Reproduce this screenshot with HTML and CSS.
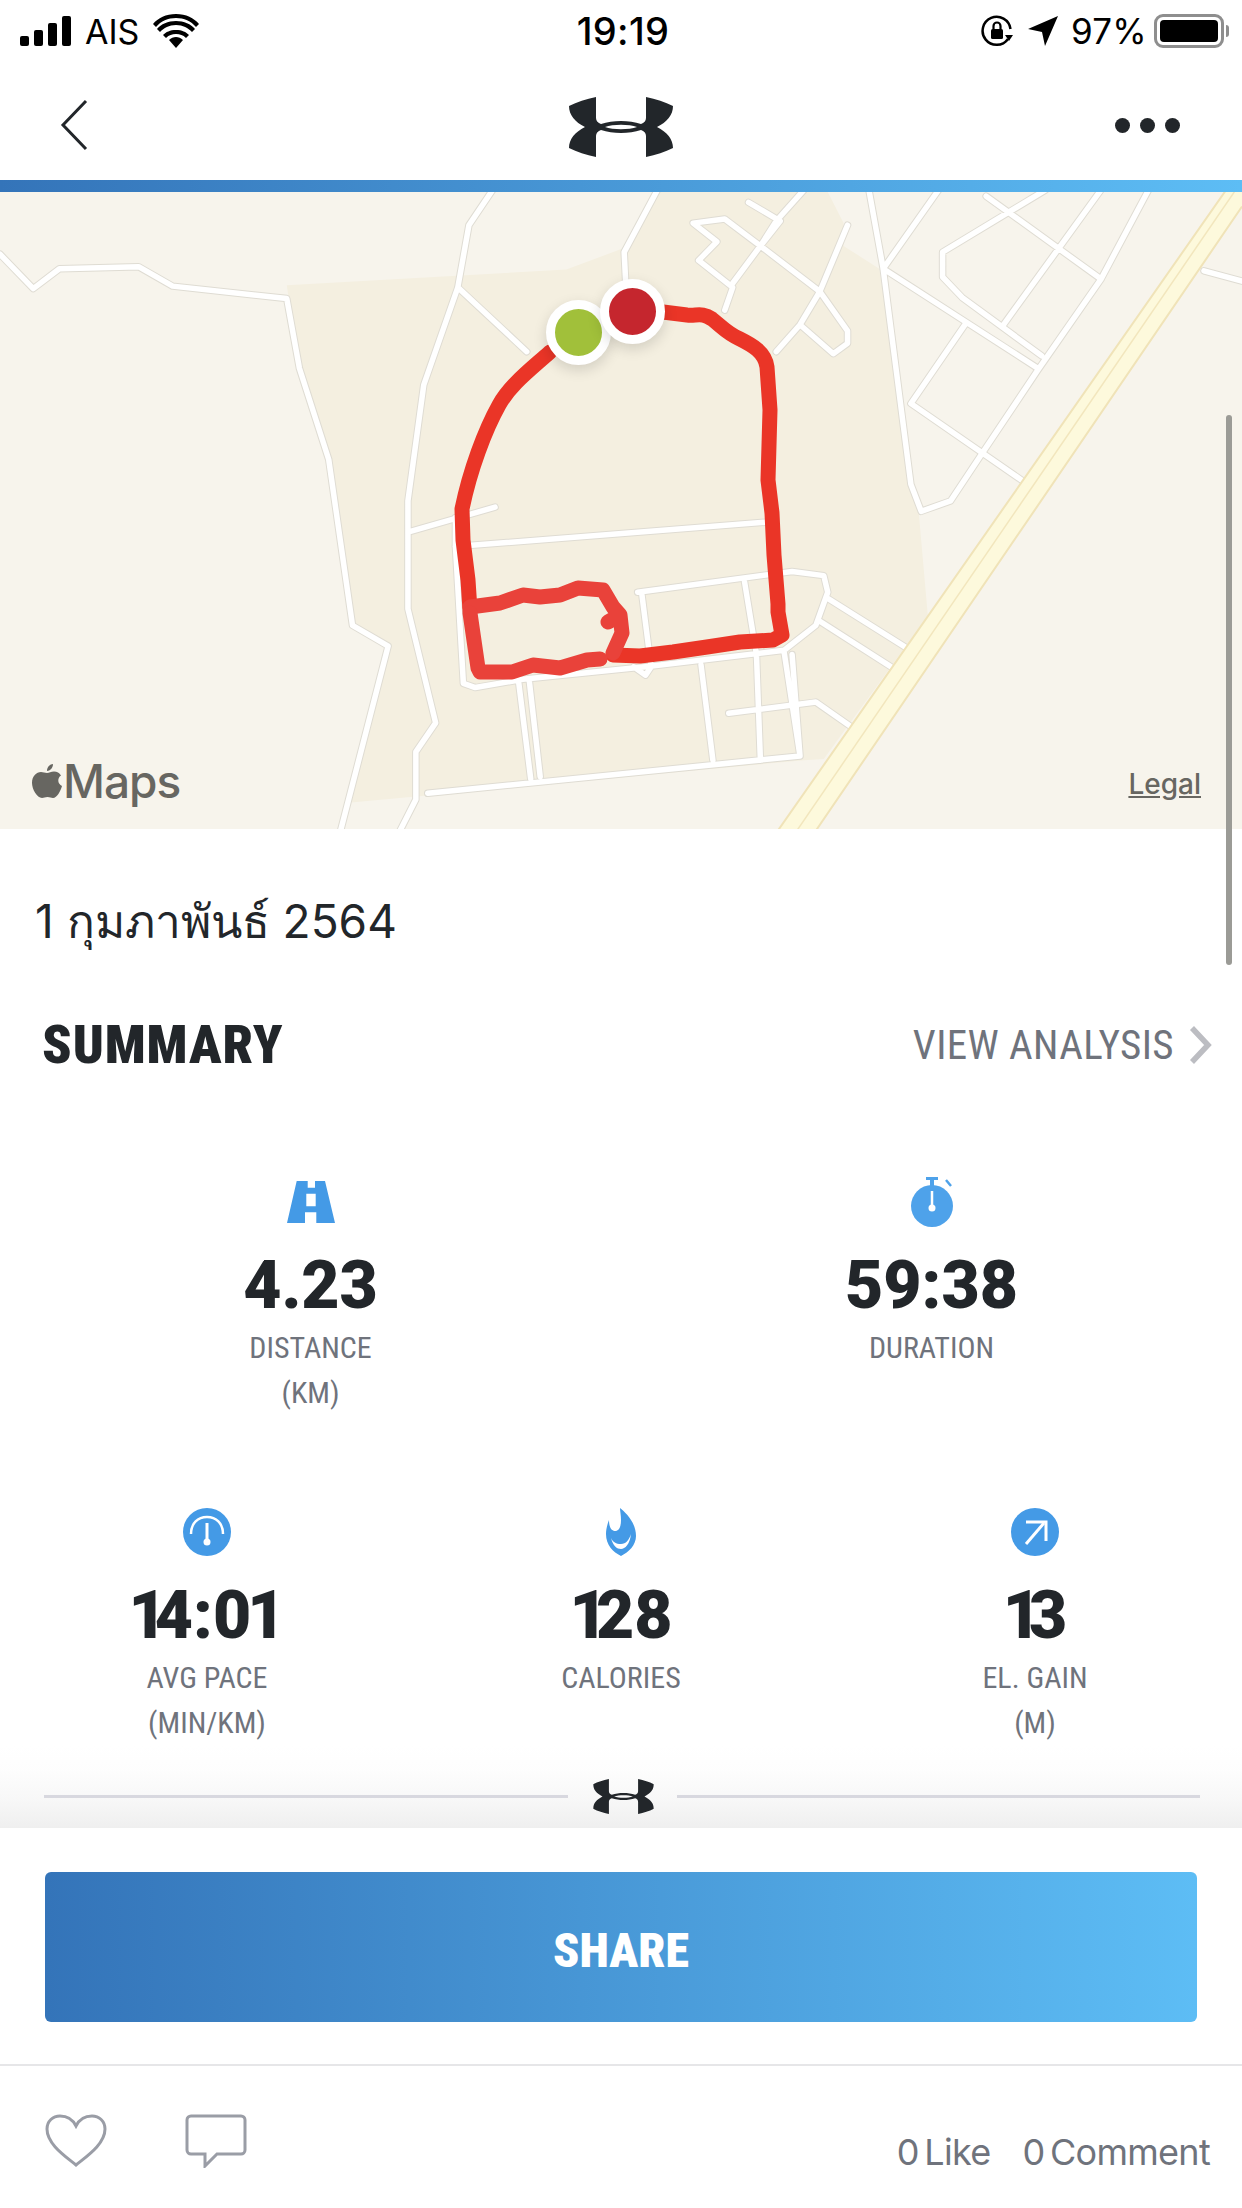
FILE: index.html
```html
<!DOCTYPE html>
<html lang="th">
<head>
<meta charset="utf-8">
<title>Workout summary</title>
<link rel="stylesheet" href="styles.css">
</head>
<body>
<div class="screen">
  <svg width="0" height="0" class="defs">
    <symbol id="ua" viewBox="0 0 104 60">
      <path fill-rule="evenodd" d="M27 0C17 2 8 5 0 9C0 18 6 25 16 30C6 35 0 42 0 51C8 55 17 58 27 60V39C27 36 29 34 32 33C44 37 60 37 72 33C75 34 77 36 77 39V60C87 58 96 55 104 51C104 42 98 35 88 30C98 25 104 18 104 9C96 5 87 2 77 0V21C77 24 75 26 72 27C60 23 44 23 32 27C29 26 27 24 27 21ZM36 30C44 27 60 27 68 30C60 33 44 33 36 30Z"/>
    </symbol>
  </svg>

  <div class="status">
    <div class="status-left">
      <svg class="signal" width="52" height="30" viewBox="0 0 52 30"><rect x="0" y="20" width="9" height="10" rx="2"/><rect x="14" y="14" width="9" height="16" rx="2"/><rect x="28" y="7" width="9" height="23" rx="2"/><rect x="42" y="0" width="9" height="30" rx="2"/></svg>
      <span class="carrier">AIS</span>
      <svg class="wifi" width="46" height="34" viewBox="0 0 46 34"><path d="M23 34L16 26C20 22 26 22 30 26ZM23 16C29 16 33 18 36 21L33 24C30 21 27 20 23 20S16 21 13 24L10 21C13 18 17 16 23 16ZM23 7C31 7 38 10 42 15L39 18C35 14 30 11 23 11S11 14 7 18L4 15C8 10 15 7 23 7ZM23 0C33 0 41 4 46 10L43 13C38 7 31 4 23 4S8 7 3 13L0 10C5 4 13 0 23 0Z"/></svg>
    </div>
    <div class="status-time">19:19</div>
    <div class="status-right">
      <svg class="lock" width="32" height="32" viewBox="0 0 32 32"><path d="M27 24A14 14 0 1 1 29.5 14" fill="none" stroke="#000" stroke-width="2.5"/><path d="M24 20h8l-4 6z"/><rect x="10" y="14" width="12" height="10" rx="1.5"/><path d="M12.500 14V11a3.500 3.500 0 0 1 7 0v3" fill="none" stroke="#000" stroke-width="2.200"/></svg>
      <svg class="arrow" width="30" height="30" viewBox="0 0 30 30"><path d="M30 0L0 13L14 16L17 30Z"/></svg>
      <span class="battery-text">97%</span>
      <div class="battery"><div class="battery-fill"></div></div>
      <div class="battery-nub"></div>
    </div>
  </div>

  <header class="topbar">
    <svg class="back" width="28" height="52" viewBox="0 0 28 52"><path d="M26 2L3 26L26 50" fill="none" stroke="#22262a" stroke-width="3"/></svg>
    <svg class="logo" width="104" height="60"><use href="#ua"/></svg>
    <div class="dots"><i></i><i></i><i></i></div>
  </header>
  <div class="gradient-bar"></div>

  <div class="map">
    <svg class="map-svg" viewBox="0 5 1568 1536" preserveAspectRatio="none">
      <defs>
        <path id="r1" class="road" d="M0 155L42 238L75 190L175 185L218 232L362 262L378 430L415 650L445 1050L490 1100L430 1545"/>
        <path id="r2" class="road" d="M622 0L592 85L578 235L535 470L515 750L515 1010L550 1285L525 1355L525 1470L505 1545M578 235L665 390M830 0L788 150L790 225M515 825L625 765M575 860L975 800"/>
        <path id="r3" class="road" d="M805 970L1000 920L1040 930L1045 970L1030 1050L990 1110L815 1150L660 1180L600 1200L585 1190L575 860L575 790M810 970L822 1150L815 1170L800 1150M940 945L955 1120L960 1375M885 1145L900 1375M540 1455L1010 1365L1000 1120M990 1115L1010 1365M655 1190L670 1420M668 1180L682 1415M920 1262L1030 1235L1075 1295M1045 985L1145 1105M1035 1040L1125 1150"/>
        <path id="r4" class="road" d="M945 30L985 75L960 135L915 70L875 80L905 125L882 170L925 235L915 290M1015 0L980 75L960 135L925 225M960 135L1035 245L1070 340V370L1052 395L1010 325L980 390M1070 85L1035 245L1010 325M1097 0L1115 190L1150 710L1163 775L1200 750L1240 635L1310 435L1390 215L1450 0M1185 0L1115 190L1310 430M1245 15L1390 215M1320 0L1190 150V210L1215 260L1315 400M1390 0L1265 330M1220 320L1150 515L1290 700M1520 195L1568 220"/>
      </defs>
      <rect x="0" y="0" width="1568" height="1568" fill="#f7f4ec"/>
      <path class="park" d="M362 230L715 192L785 142L830 5H1045L1065 80V135L1110 190L1135 500L1160 780L1172 1040L1140 1110L1040 1372L1015 1375L440 1478L490 1100L445 1050L415 650L378 430Z"/>
      <g class="halo"><use href="#r1"/><use href="#r2"/><use href="#r3"/><use href="#r4"/></g>
      <g class="core"><use href="#r1"/><use href="#r2"/><use href="#r3"/><use href="#r4"/></g>
      <path class="hw-band" d="M1548 0H1568V40L1030 1545H982Z"/>
      <path class="hw-edge" d="M1548 0L982 1545M1568 40L1030 1545"/>
      <path class="hw-line" d="M1560 0L1006 1545"/>
    </svg>
    <svg class="route-layer" viewBox="0 192 1242 637">
      <path class="route" d="M663 312L687 315C697 316 702 312 712 319C722 327 728 334 740 339C752 345 765 352 767 367L770 410L768 480L772 513L774 555L778 604L778 612L782 635L773 640L740 642L707 647L673 652L640 656L613 655"/>
      <path class="route" d="M550 352C530 370 510 385 499 405C485 430 470 470 462 509L463 540L468 580L470 610"/>
      <path class="route route-soft" d="M470 607L500 603L523 595L540 597L560 595L578 588L603 590L613 607L620 615L622 633L613 653M608 622L620 615"/>
      <path class="route route-soft" d="M470 613L478 668L480 672L512 672L533 665L560 668L587 660L600 659"/>
    </svg>
    <div class="pin pin-green"></div>
    <div class="pin pin-red"></div>
    <div class="maps-mark">
      <svg width="30" height="36" viewBox="0 0 30 36"><path d="M21 1C21 5 18 8 15 8C15 4 18 1 21 1ZM15 10C17 10 19 8.500 22 8.500C25 8.500 27.500 10 29 12.500C25 15 25.500 21 30 23C28.500 28 25 35 21 35C19 35 18 34 15.500 34S12 35 10 35C5 35 0 26 0 20C0 13 4.500 9 9 9C11 9 13 10 15 10Z"/></svg>
      <span>Maps</span>
    </div>
    <span class="legal">Legal</span>
  </div>

  <div class="scrollbar"></div>

  <div class="date">1 กุมภาพันธ์ 2564</div>

  <div class="summary-head">
    <h2 class="summary-title">SUMMARY</h2>
    <div class="analysis">
      <span class="analysis-text">VIEW ANALYSIS</span>
      <svg width="24" height="38" viewBox="0 0 24 38"><path d="M4 2L20 19L4 36" fill="none" stroke="#bcbdc2" stroke-width="5.500"/></svg>
    </div>
  </div>

  <div class="stats stats-two">
    <div class="stat">
      <div class="stat-icon"><svg width="48" height="42" viewBox="0 0 48 42"><path fill="#449ae6" fill-rule="evenodd" d="M9.700 0H20.700V6.700H28V0H38L48 42H29.300V31.300H18V42H0ZM19.300 12.700V25.300H28.700V12.700Z"/></svg></div>
      <div class="stat-value">4.23</div>
      <div class="stat-label">DISTANCE<br>(KM)</div>
    </div>
    <div class="stat">
      <div class="stat-icon"><svg width="48" height="50" viewBox="0 0 48 50"><circle cx="24" cy="29" r="21" fill="#4ea2ea"/><rect x="18" y="0" width="12" height="3" fill="#4ea2ea"/><rect x="22" y="2" width="4" height="7" fill="#4ea2ea"/><path d="M38 3L43 9" stroke="#4ea2ea" stroke-width="2.500"/><path d="M24 14V34" stroke="#fff" stroke-width="2.500"/><circle cx="24" cy="31" r="3.500" fill="#fff"/></svg></div>
      <div class="stat-value">59:38</div>
      <div class="stat-label">DURATION</div>
    </div>
  </div>

  <div class="stats stats-three">
    <div class="stat">
      <div class="stat-icon"><svg width="48" height="48" viewBox="0 0 48 48"><circle cx="24" cy="24" r="24" fill="#449ae6"/><path d="M8 26C8 15 15 9 24 9S40 15 40 26" fill="none" stroke="#fff" stroke-width="2.500"/><path d="M24 15V32" stroke="#fff" stroke-width="3"/><circle cx="24" cy="34" r="3.500" fill="#fff"/></svg></div>
      <div class="stat-value"><span class="one">1</span>4:<span class="zero">0</span>1</div>
      <div class="stat-label">AVG PACE<br>(MIN/KM)</div>
    </div>
    <div class="stat">
      <div class="stat-icon"><svg width="32" height="48" viewBox="0 0 32 48"><path fill="#449ae6" d="M15 0C20 4 31 14 31 28C31 37 24 44 16 48C8 44 1 37 1 26C1 22 2 17 4 12C4 20 7 23 10 23C14 23 16 19 16 12C16 7 15 3 15 0Z"/><path d="M6 30C8 38 12 41 16 41C20 41 25 36 26 26C24 32 21 36 16 36C11 36 8 34 6 30Z" fill="#fff"/></svg></div>
      <div class="stat-value"><span class="one">1</span>28</div>
      <div class="stat-label">CALORIES</div>
    </div>
    <div class="stat">
      <div class="stat-icon"><svg width="48" height="48" viewBox="0 0 48 48"><circle cx="24" cy="24" r="24" fill="#449ae6"/><path d="M15 14H35V33" fill="none" stroke="#fff" stroke-width="3"/><path d="M33 15L15 36" stroke="#fff" stroke-width="3"/></svg></div>
      <div class="stat-value"><span class="one">1</span>3</div>
      <div class="stat-label">EL. GAIN<br>(M)</div>
    </div>
  </div>

  <div class="fade">
    <div class="rule"></div>
    <svg class="logo-small" width="61" height="35" viewBox="0 0 104 60"><use href="#ua"/></svg>
    <div class="rule"></div>
  </div>

  <div class="share-wrap">
    <button class="share">SHARE</button>
  </div>

  <footer class="social">
    <svg class="heart" width="62" height="54" viewBox="0 0 62 54"><path d="M31 51C20 42 2 30 2 15C2 7 8 2 15 2C22 2 28 6 31 12C34 6 40 2 47 2C54 2 60 7 60 15C60 30 42 42 31 51Z" fill="none" stroke="#9a9da6" stroke-width="3"/></svg>
    <svg class="bubble" width="62" height="54" viewBox="0 0 62 54"><path d="M6 2H56A4 4 0 0 1 60 6V36A4 4 0 0 1 56 40H32L20 52V40H6A4 4 0 0 1 2 36V6A4 4 0 0 1 6 2Z" fill="none" stroke="#9a9da6" stroke-width="3"/></svg>
    <div class="counts"><span>0 Like</span><span>0 Comment</span></div>
  </footer>
</div>
</body>
</html>
```
FILE: styles.css
```css
* { box-sizing: border-box; }
html, body { margin: 0; padding: 0; background: #fff; }
.screen { position: relative; width: 1242px; height: 2208px; overflow: hidden; font-family: Inter, Roboto, "Noto Sans", sans-serif; color: #22262a; display: flex; flex-direction: column; }
.defs { position: absolute; }

.status { height: 62px; flex: none; display: grid; grid-template-columns: 1fr auto 1fr; align-items: center; padding: 0 16px 0 20px; color: #000; font-size: 34px; }
.status-left { display: flex; align-items: center; gap: 13px; }
.status-right { display: flex; align-items: center; justify-content: flex-end; }
.status-time { font-weight: 500; font-size: 38px; letter-spacing: .3px; }
.carrier { font-size: 34px; }
.wifi { margin-left: 1px; }
.arrow { margin-left: 15px; }
.battery-text { margin: 0 7px 0 13px; font-size: 35px; letter-spacing: .3px; }
.battery { width: 70px; height: 34px; border: 3px solid #8e8e8e; border-radius: 9px; padding: 3px; }
.battery-fill { width: 100%; height: 100%; background: #000; border-radius: 4px; }
.battery-nub { width: 3px; height: 12px; background: #8e8e8e; border-radius: 0 3px 3px 0; margin-left: 2px; margin-right: -3px; }

.topbar { height: 118px; flex: none; display: grid; grid-template-columns: 1fr auto 1fr; align-items: center; padding: 8px 62px 0 60px; }
.back { display: block; }
.logo { display: block; fill: #22262a; margin: 4px 0 0 2px; }
.dots { display: flex; justify-content: flex-end; gap: 10px; }
.dots i { width: 15px; height: 15px; border-radius: 50%; background: #22262a; display: block; }
.gradient-bar { height: 12px; flex: none; background: linear-gradient(90deg, #3474b9, #5dbdf5); }

.map { position: relative; height: 637px; flex: none; background: #f7f4ec; overflow: hidden; }
.map-svg { display: block; width: 100%; height: 100%; }
.route-layer { position: absolute; inset: 0; width: 100%; height: 100%; }
.park { fill: #f4efe0; }
.road { fill: none; stroke-linejoin: round; stroke-linecap: round; vector-effect: non-scaling-stroke; }
.halo { stroke: #dfdcd3; stroke-width: 7.5px; }
.core { stroke: #fff; stroke-width: 5.5px; }
.hw-band { fill: #fdf9dc; }
.hw-edge { fill: none; stroke: #f0e3b8; stroke-width: 2px; vector-effect: non-scaling-stroke; }
.hw-line { fill: none; stroke: #f2e6bd; stroke-width: 1.5px; vector-effect: non-scaling-stroke; }
.route { fill: none; stroke: #ea3527; stroke-width: 15px; stroke-linejoin: round; stroke-linecap: round; }
.route-soft { stroke: #e9423a; }
.pin { position: absolute; width: 65px; height: 65px; border-radius: 50%; border: 9px solid #fff; box-shadow: 0 5px 14px rgba(0,0,0,.14); }
.pin-green { left: 546px; top: 108px; background: #a1c03a; }
.pin-red { left: 600px; top: 87px; background: #c5262e; }
.maps-mark { position: absolute; left: 32px; bottom: 20px; display: flex; align-items: center; gap: 1px; color: #676661; fill: #676661; font-size: 46px; font-weight: 500; letter-spacing: -1px; }
.legal { position: absolute; right: 41px; bottom: 28px; font-size: 28px; font-weight: 500; color: #676661; text-decoration: underline; }

.scrollbar { position: absolute; left: 1226px; top: 415px; width: 6px; height: 550px; border-radius: 3px; background: #9b9b96; }

.date { height: 156px; flex: none; padding: 64px 0 0 35px; font-size: 46px; line-height: 56px; font-weight: 400; font-family: Inter, "Noto Sans", sans-serif; }

.summary-head { height: 115px; flex: none; display: flex; justify-content: space-between; align-items: center; padding: 4px 30px 0 42px; }
.summary-title { margin: 0; font-family: Roboto, sans-serif; font-weight: 900; font-size: 54px; font-stretch: 87%; letter-spacing: .9px; }
.analysis { display: flex; align-items: center; gap: 14px; }
.analysis-text { font-family: Roboto, sans-serif; font-size: 41px; color: #6f737c; font-stretch: 87%; letter-spacing: .4px; }

.stats { display: grid; flex: none; }
.stats-two { grid-template-columns: 1fr 1fr; margin-top: 78px; height: 237px; }
.stats-three { grid-template-columns: 1fr 1fr 1fr; margin-top: 93px; height: 237px; }
.stat { display: flex; flex-direction: column; align-items: center; text-align: center; }
.stat-icon { height: 48px; display: flex; align-items: center; justify-content: center; }
.stat-value { margin-top: 24px; font-family: Roboto, sans-serif; font-weight: 900; font-size: 66px; line-height: 72px; }
.one { letter-spacing: -12px; }
.zero { letter-spacing: -4px; }
.stat-label { margin-top: 3px; font-family: Roboto, sans-serif; font-size: 30px; line-height: 45px; color: #6f737c; font-stretch: 85%; }

.fade { height: 83px; flex: none; display: flex; align-items: center; gap: 25px; padding: 20px 42px 0 44px; background: linear-gradient(180deg, rgba(239,239,239,0), rgba(239,239,239,.1) 30%, rgba(239,239,239,.45) 65%, #efefef); }
.rule { flex: 1; height: 3px; background: #d8d8df; }
.logo-small { fill: #22262a; flex: none; margin-right: -2px; }

.share-wrap { flex: none; height: 238px; padding: 44px 45px 42px; border-bottom: 2px solid #e6e6e8; }
.share { display: block; width: 100%; height: 150px; border: 0; border-radius: 6px; padding: 6px 0 0; background: linear-gradient(90deg, #3474b9, #5dbdf5); color: #fff; font-family: Roboto, sans-serif; font-weight: 900; font-size: 48px; font-stretch: 85%; }

.social { flex: 1; position: relative; display: flex; align-items: center; padding: 8px 32px 0 45px; }
.bubble { margin-left: 78px; }
.counts { margin-left: auto; display: flex; gap: 32px; font-size: 36px; color: #6f737c; padding-top: 22px; letter-spacing: -.7px; word-spacing: -4px; }
```
